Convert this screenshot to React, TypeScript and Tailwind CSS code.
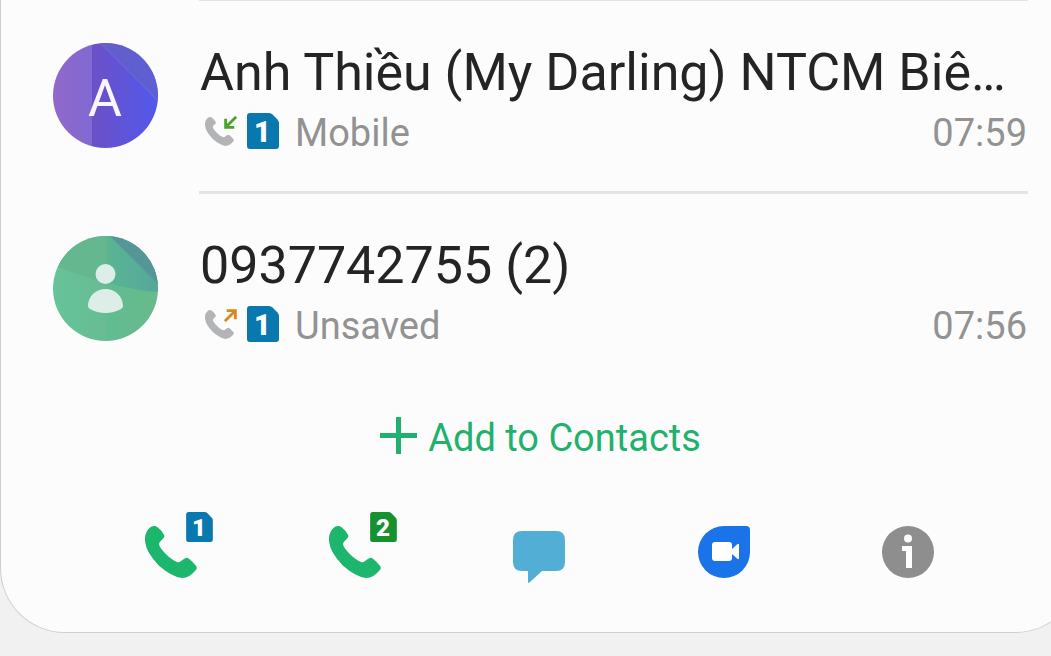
import { useId } from "react";

interface SimBadgeProps {
  slot: number;
  color: string;
  className?: string;
}

// SIM card shape with the slot number on it
const SimBadge = ({ slot, color, className = "" }: SimBadgeProps) => (
  <svg viewBox="0 0 32 36" className={`overflow-visible ${className}`} aria-label={`SIM ${slot}`}>
    <path
      fill={color}
      d="M3 0H22Q24 0 25.500 1.500L30.500 6.500Q32 8 32 10V33Q32 36 29 36H3Q0 36 0 33V3Q0 0 3 0Z"
    />
    <text
      x="15.500"
      y="28.500"
      textAnchor="middle"
      fontSize="29"
      fontWeight="900"
      fill="#fff"
      fontFamily="Roboto, sans-serif"
    >
      {slot}
    </text>
  </svg>
);

const Handset = ({ className }: { className?: string }) => (
  <svg viewBox="0 0 156 156" fill="currentColor" className={className} aria-hidden="true">
    <path d="M14 5Q26 -4 38 4Q50 14 57 26Q60 32 55 37L45 47Q40 53 44 61Q52 76 72 93Q84 103 96 108Q102 110 107 106L118 98Q126 93 132 98Q145 108 154 121Q157 127 153 131Q134 156 111 156Q80 152 42 119Q4 79 1 50Q-4 22 14 5Z" />
  </svg>
);

const CallDirection = ({ incoming }: { incoming: boolean }) => (
  <span className="relative block h-9 w-8" role="img" aria-label={incoming ? "Incoming call" : "Outgoing call"}>
    <Handset className="absolute top-1 left-0 size-[29px] text-[#b3b4b6]" />
    <svg viewBox="0 0 12 12" fill="none" strokeWidth="2.600" className="absolute top-[3px] right-0 size-[13px]">
      {incoming ? (
        <path stroke="#4aa22c" d="M11.200 .8L2 10M1.500 2.500V10.500H9.500" />
      ) : (
        <path stroke="#e08423" d="M.8 11.200L10 2M2.500 1.500H10.500V9.500" />
      )}
    </svg>
  </span>
);

const LetterAvatar = ({ letter }: { letter: string }) => {
  const id = useId();
  return (
    <svg viewBox="0 0 105 105" className="size-[105px] shrink-0">
      <defs>
        <linearGradient id={`${id}g`}>
          <stop offset="0" stopColor="#9268c9" />
          <stop offset=".37" stopColor="#8069d3" />
          <stop offset=".37" stopColor="#6d50c7" />
          <stop offset="1" stopColor="#5059ec" />
        </linearGradient>
        <clipPath id={`${id}c`}>
          <circle cx="52.500" cy="52.500" r="52.500" />
        </clipPath>
      </defs>
      <g clipPath={`url(#${id}c)`}>
        <rect width="105" height="105" fill={`url(#${id}g)`} />
        <path d="M44 -3L105 58V0Z" fill="#6464c8" fillOpacity=".65" />
        <path d="M44 -3L105 58" stroke="#7770e0" strokeOpacity=".7" />
      </g>
      <text x="52" y="73" textAnchor="middle" fontSize="52" fill="#fbf5ff" fontFamily="Roboto, sans-serif">
        {letter}
      </text>
    </svg>
  );
};

const UnknownAvatar = () => {
  const id = useId();
  return (
    <svg viewBox="0 0 105 105" className="size-[105px] shrink-0" aria-hidden="true">
      <defs>
        <linearGradient id={`${id}l`} x1="0" x2="1">
          <stop offset="0" stopColor="#66c39a" />
          <stop offset=".51" stopColor="#68bc93" />
          <stop offset=".52" stopColor="#61bc92" />
          <stop offset="1" stopColor="#68ba8b" />
        </linearGradient>
        <linearGradient id={`${id}r`} x1="0" x2="1">
          <stop offset="0" stopColor="#5ab592" />
          <stop offset="1" stopColor="#55a79b" />
        </linearGradient>
        <clipPath id={`${id}c`}>
          <circle cx="52.500" cy="52.500" r="52.500" />
        </clipPath>
      </defs>
      <g clipPath={`url(#${id}c)`}>
        <rect width="105" height="105" fill={`url(#${id}l)`} />
        <path d="M0 29Q25 39 54 47V0H0Z" fill="#65b78f" />
        <path d="M54 47Q80 54 105 56V0H54Z" fill={`url(#${id}r)`} />
        <path d="M54 -3L105 48V0Z" fill="#559799" />
      </g>
      <g fill="#dceee7">
        <circle cx="52.500" cy="38" r="10" />
        <path d="M35 70C35 60 43 53 52.500 53S70 60 70 70Q70 72 68 73Q61 77 52.500 77T37 73Q35 72 35 70Z" />
      </g>
    </svg>
  );
};

interface CallRowProps {
  avatar: React.ReactNode;
  name: string;
  label: string;
  time: string;
  incoming: boolean;
}

const CallRow = ({ avatar, name, label, time, incoming }: CallRowProps) => (
  <li className="flex h-[193px] gap-[41px]">
    <div className="pt-[45px]">{avatar}</div>
    <div className="min-w-0 flex-1 border-t-[3px] border-[#e4e4e4] pt-[42px]">
      <h2 className="truncate pl-px text-[52px] leading-[60px] text-[#242424]">{name}</h2>
      <div className="flex items-center pt-2 pr-px pl-[6px] text-[38px] leading-[44px] text-[#929292]">
        <div className="flex gap-2.5 pb-1">
          <CallDirection incoming={incoming} />
          <SimBadge slot={1} color="#0878ae" className="h-9 w-8" />
        </div>
        <span className="ml-4">{label}</span>
        <time className="ml-auto">{time}</time>
      </div>
    </div>
  </li>
);

const CallAction = ({ slot, color }: { slot: number; color: string }) => (
  <button type="button" aria-label={`Call with SIM ${slot}`} className="relative size-[52px]">
    <Handset className="size-[52px] text-[#1cb76c]" />
    <SimBadge slot={slot} color={color} className="absolute -top-3.5 -right-4 h-[30px] w-[27px]" />
  </button>
);

export default function App() {
  return (
    <div className="min-h-screen overflow-hidden bg-[#f1f1f1] font-['Roboto',sans-serif]">
      <main className="-mt-0.5 -mr-[29px] rounded-b-[65px] border-b border-l border-[#cfcfcf] bg-[#fcfcfc] pb-[54px]">
        <ul className="px-[52px]">
          <CallRow
            avatar={<LetterAvatar letter="A" />}
            name="Anh Thiều (My Darling) NTCM Biê…"
            label="Mobile"
            time="07:59"
            incoming
          />
          <CallRow avatar={<UnknownAvatar />} name="0937742755 (2)" label="Unsaved" time="07:56" incoming={false} />
        </ul>

        <button
          type="button"
          className="mx-auto mt-8 flex items-start gap-[11px] text-[38px] leading-[44px] text-[#1fb16d]"
        >
          <svg viewBox="0 0 37 37" className="mt-px size-[37px]" stroke="currentColor" strokeWidth="5" aria-hidden="true">
            <path d="M0 18.500H37M18.500 0V37" />
          </svg>
          Add to Contacts
        </button>

        <div className="mt-[66px] grid grid-cols-5 justify-items-center pr-[80px] pl-[78px]">
          <CallAction slot={1} color="#0878ae" />
          <CallAction slot={2} color="#15912e" />
          <button type="button" aria-label="Send message" className="size-[52px]">
            <svg viewBox="0 0 52 52" className="size-[52px] overflow-visible" fill="#52aed5">
              <path d="M9 5H43Q52 5 52 14V36Q52 45 43 45H29L17 56Q15 58 15 56V45H9Q0 45 0 36V14Q0 5 9 5Z" />
            </svg>
          </button>
          <button type="button" aria-label="Video call" className="size-[52px]">
            <svg viewBox="0 0 52 52" className="size-[52px]">
              <path fill="#1a73e8" d="M26 0H48Q52 0 52 4V26A26 26 0 1 1 26 0Z" />
              <path
                fill="#fff"
                d="M17 16H31Q34 16 34 19V23L39 18.500Q41 17 41 19V32Q41 34 39 32.500L34 28V32Q34 35 31 35H17Q14 35 14 32V19Q14 16 17 16Z"
              />
            </svg>
          </button>
          <button type="button" aria-label="Details" className="size-[52px]">
            <svg viewBox="0 0 52 52" className="size-[52px]">
              <circle cx="26" cy="26" r="26" fill="#8e8e8e" />
              <circle cx="26" cy="12.500" r="4" fill="#fff" />
              <path fill="#fff" d="M20 20H30V42H24V25H20Z" />
            </svg>
          </button>
        </div>
      </main>
    </div>
  );
}
